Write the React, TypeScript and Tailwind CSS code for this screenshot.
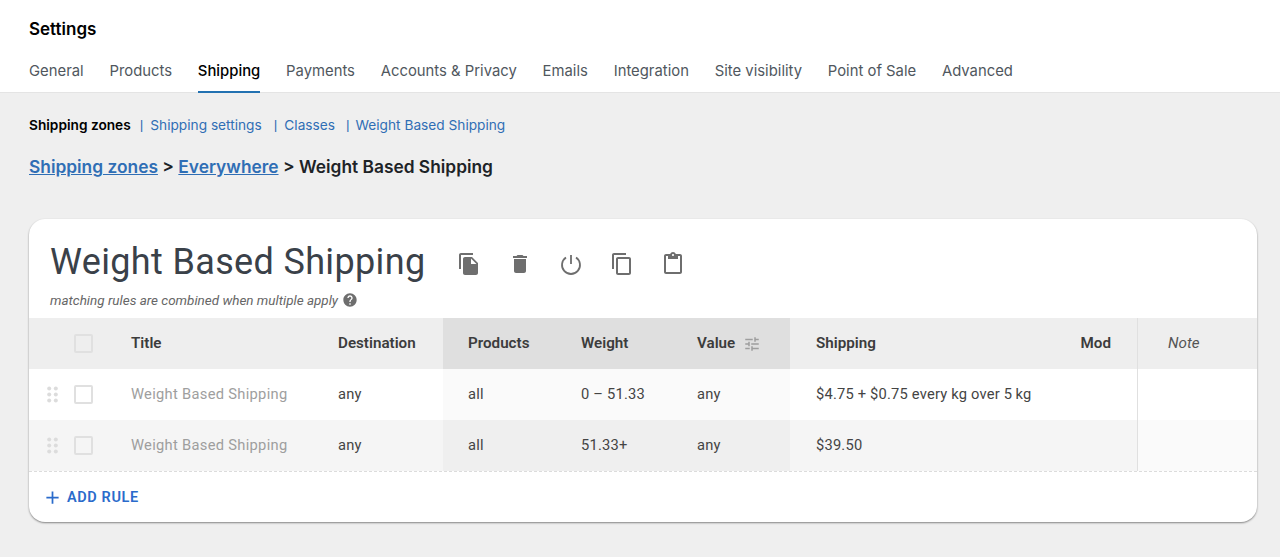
const tabs = ["General", "Products", "Shipping", "Payments", "Accounts & Privacy", "Emails", "Integration", "Site visibility", "Point of Sale", "Advanced"];

const gridCols = "grid grid-cols-[102px_207px_105px_113px_116px_118px_347px_120px]";

const Icon = ({ d, className }: { d: string; className: string }) => (
  <svg viewBox="0 0 24 24" fill="currentColor" className={className}>
    <path d={d} />
  </svg>
);

const Checkbox = ({ className = "" }: { className?: string }) => (
  <span className={`block h-[19px] w-[19px] rounded-[2px] border-2 border-[#e0e0e0] ${className}`} />
);

const DragDots = () => (
  <svg viewBox="0 0 11 17" fill="#dcdcdc" className="h-[17px] w-[11px]">
    <circle cx="2.2" cy="2.4" r="2" />
    <circle cx="8.8" cy="2.4" r="2" />
    <circle cx="2.2" cy="8.5" r="2" />
    <circle cx="8.8" cy="8.5" r="2" />
    <circle cx="2.2" cy="14.6" r="2" />
    <circle cx="8.8" cy="14.6" r="2" />
  </svg>
);

const Row = ({ weight, shipping, alt }: { weight: string; shipping: string; alt?: boolean }) => {
  const mid = alt ? "bg-[#efefef]" : "bg-[#fafafa]";
  return (
    <div className={`${gridCols} h-[51px] items-stretch text-[14.7px] tracking-[0.2px] text-[#444] ${alt ? "bg-[#f5f5f5]" : "bg-white"}`}>
      <div className="flex items-center pl-[18px]">
        <DragDots />
        <Checkbox className={alt ? "ml-[16px]" : "ml-[16px] bg-white"} />
      </div>
      <div className="flex items-center tracking-[0.3px] text-[#9e9e9e]">Weight Based Shipping</div>
      <div className="flex items-center">any</div>
      <div className={`flex items-center pl-[25px] ${mid}`}>all</div>
      <div className={`flex items-center pl-[25px] ${mid}`}>{weight}</div>
      <div className={`flex items-center pl-[25px] ${mid}`}>any</div>
      <div className="flex items-center pl-[26px]">{shipping}</div>
      <div className={`border-l border-[#e0e0e0] ${alt ? "bg-[#fafafa]" : ""}`} />
    </div>
  );
};

export default function App() {
  return (
    <div className="min-h-[557px] bg-[#efefef] font-['Inter','Liberation_Sans',sans-serif]">
      <div className="h-[93px] border-b border-[#e4e4e4] bg-white px-[29px]">
        <h1 className="pt-[19px] text-[17px] leading-[20px] font-semibold text-black">Settings</h1>
        <nav className="mt-[11px] flex gap-[25.75px] text-[14.85px] text-[#50575e]">
          {tabs.map((t) => (
            <a
              key={t}
              className={`block h-[43px] pt-[11px] leading-[20px] ${t === "Shipping" ? "border-b-2 border-[#2271b1] font-medium text-black" : ""}`}
            >
              {t}
            </a>
          ))}
        </nav>
      </div>

      <div className="pr-[23px] pl-[29px]">
        <div className="flex items-center pt-[23px] text-[13.7px] leading-[18px] text-[#2f6eb5]">
          <span className="font-semibold text-black">Shipping zones</span>
          <span className="ml-[9px] font-['Liberation_Sans',sans-serif]">|</span>
          <a className="ml-[7px]">Shipping settings</a>
          <span className="ml-[12px] font-['Liberation_Sans',sans-serif]">|</span>
          <a className="ml-[7px]">Classes</a>
          <span className="ml-[11px] font-['Liberation_Sans',sans-serif]">|</span>
          <a className="ml-[6px]">Weight Based Shipping</a>
        </div>

        <h2 className="mt-[21px] text-[17.35px] leading-[24px] font-semibold text-[#1d2327]">
          <a className="text-[#2f6eb5] underline">Shipping zones</a> &gt; <a className="text-[#2f6eb5] underline">Everywhere</a> &gt; Weight Based Shipping
        </h2>

        <div className="mt-[40px] h-[303px] overflow-hidden rounded-[16px] bg-white font-['Roboto',sans-serif] shadow-[0_1px_2px_rgba(0,0,0,0.45)]">
          <div className="h-[99px] pl-[21px]">
            <div className="flex items-center pt-[20px]">
              <h3 className="text-[36px] leading-[46px] tracking-[0.35px] text-[#3a4149]">Weight Based Shipping</h3>
              <div className="mt-[4px] ml-[31px] flex items-center gap-[27px] text-[#6e6e6e]">
                <Icon className="h-[24px] w-[24px]" d="M16 1H4c-1.1 0-2 .9-2 2v14h2V3h12V1zm-1 4l6 6v10c0 1.1-.9 2-2 2H7.99C6.89 23 6 22.1 6 21l.01-14c0-1.1.89-2 1.99-2h7zm-1 7h5.5L14 6.5V12z" />
                <Icon className="h-[24px] w-[24px]" d="M6 19c0 1.1.9 2 2 2h8c1.1 0 2-.9 2-2V7H6v12zM19 4h-3.5l-1-1h-5l-1 1H5v2h14V4z" />
                <svg viewBox="0 0 24 24" fill="none" stroke="currentColor" strokeWidth="1.8" className="h-[24px] w-[24px]">
                  <path d="M12 3v9" />
                  <path d="M7 5.5a9 9 0 1 0 10 0" />
                </svg>
                <Icon className="h-[24px] w-[24px]" d="M16 1H4c-1.1 0-2 .9-2 2v14h2V3h12V1zm3 4H8c-1.1 0-2 .9-2 2v14c0 1.1.9 2 2 2h11c1.1 0 2-.9 2-2V7c0-1.1-.9-2-2-2zm0 16H8V7h11v14z" />
                <Icon className="h-[24px] w-[24px]" d="M19 2h-4.18C14.4.84 13.3 0 12 0c-1.3 0-2.4.84-2.82 2H5c-1.1 0-2 .9-2 2v16c0 1.1.9 2 2 2h14c1.1 0 2-.9 2-2V4c0-1.1-.9-2-2-2zm-7 0c.55 0 1 .45 1 1s-.45 1-1 1-1-.45-1-1 .45-1 1-1zm7 18H5V4h2v3h10V4h2v16z" />
              </div>
            </div>
            <p className="mt-[6px] flex items-center text-[13.48px] leading-[18px] text-[#666] italic">
              matching rules are combined when multiple apply
              <Icon className="ml-[4px] h-[16px] w-[16px] text-[#6e6e6e]" d="M12 2C6.48 2 2 6.48 2 12s4.48 10 10 10 10-4.48 10-10S17.52 2 12 2zm1 17h-2v-2h2v2zm2.07-7.75l-.9.92C13.45 12.9 13 13.5 13 15h-2v-.5c0-1.1.45-2.1 1.17-2.83l1.24-1.26c.37-.36.59-.86.59-1.41 0-1.1-.9-2-2-2s-2 .9-2 2H8c0-2.21 1.79-4 4-4s4 1.79 4 4c0 .88-.36 1.68-.93 2.25z" />
            </p>
          </div>

          <div className={`${gridCols} h-[51px] items-stretch bg-[#eeeeee] text-[15.2px] font-semibold text-[#3c3c3c]`}>
            <div className="flex items-center pl-[45px]">
              <Checkbox />
            </div>
            <div className="flex items-center">Title</div>
            <div className="flex items-center">Destination</div>
            <div className="flex items-center bg-[#dfdfdf] pl-[25px]">Products</div>
            <div className="flex items-center bg-[#dfdfdf] pl-[25px]">Weight</div>
            <div className="flex items-center bg-[#dfdfdf] pl-[25px]">
              Value
              <Icon className="ml-[8px] h-[18px] w-[18px] text-[#9e9e9e]" d="M3 17v2h6v-2H3zM3 5v2h10V5H3zm10 16v-2h8v-2h-8v-2h-2v6h2zM7 9v2H3v2h4v2h2V9H7zm14 4v-2H11v2h10zm-6-4h2V7h4V5h-4V3h-2v6z" />
            </div>
            <div className="flex items-center justify-between pr-[26px] pl-[26px]">
              <span>Shipping</span>
              <span>Mod</span>
            </div>
            <div className="flex items-center border-l border-[#e0e0e0] pl-[30px] font-normal text-[#555] italic">Note</div>
          </div>

          <Row weight="0 – 51.33" shipping={"$4.75 + $0.75 every kg over 5\u2009kg"} />
          <Row alt weight="51.33+" shipping="$39.50" />

          <div className="flex h-[51px] items-center border-t border-dashed border-[#dcdcdc] pt-[1px] pl-[13px] text-[14.5px] font-semibold tracking-[0.6px] text-[#2a6bcb]">
            <Icon className="h-[21px] w-[21px]" d="M19 13h-6v6h-2v-6H5v-2h6V5h2v6h6v2z" />
            <span className="ml-[4px]">ADD RULE</span>
          </div>
        </div>
      </div>
    </div>
  );
}
